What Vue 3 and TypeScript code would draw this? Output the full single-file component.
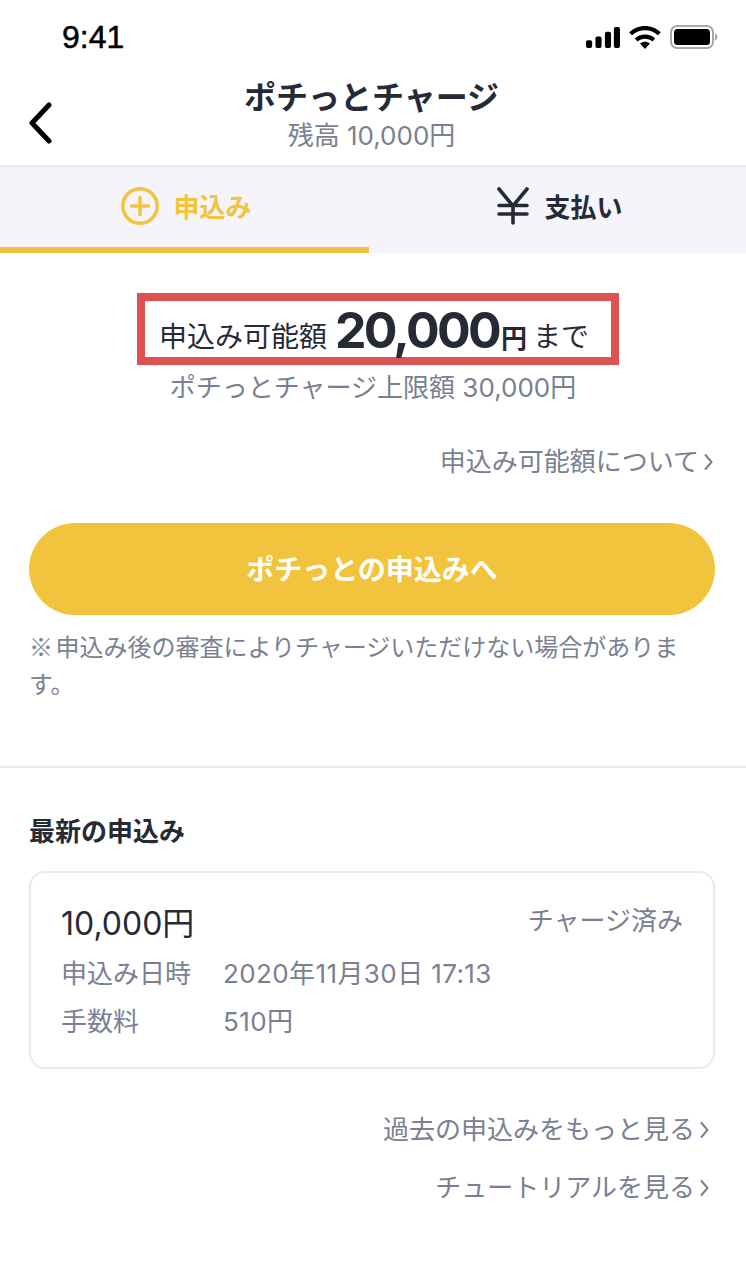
<script setup lang="ts">
const rows: { label: string; value: string }[] = [
  { label: '申込み日時', value: '2020年11月30日 17:13' },
  { label: '手数料', value: '510円' },
]
</script>

<template>
  <div class="page">
    <div class="status">
      <span class="time">9:41</span>
      <div class="status-icons">
        <svg width="34" height="21" viewBox="0 0 36 22">
          <rect x="0" y="14" width="6.500" height="8" rx="2" fill="#000" />
          <rect x="10" y="10" width="6.500" height="12" rx="2" fill="#000" />
          <rect x="20" y="5" width="6.500" height="17" rx="2" fill="#000" />
          <rect x="29.500" y="0" width="6.500" height="22" rx="2" fill="#000" />
        </svg>
        <svg width="32" height="23" viewBox="0 0 32 23">
          <path d="M16 23l-5-5.500c2.800-2.400 7.200-2.400 10 0z" fill="#000" />
          <path d="M16 8.500c4 0 7.600 1.500 10.200 4l-2.800 3c-4.200-3.600-10.600-3.600-14.800 0l-2.800-3c2.600-2.500 6.200-4 10.200-4z" fill="#000" />
          <path d="M16 0c6.100 0 11.700 2.400 15.800 6.300l-2.800 3C25.600 6 21 4.200 16 4.200S6.400 6 3 9.300L.2 6.300C4.300 2.400 9.900 0 16 0z" fill="#000" />
        </svg>
        <svg width="48" height="24" viewBox="0 0 48 24">
          <rect x="1" y="1" width="42" height="22" rx="6" fill="none" stroke="#a8a8a8" stroke-width="2" />
          <rect x="4" y="4" width="36" height="16" rx="3.500" fill="#000" />
          <path d="M45 8.500c1.500.5 2.500 2 2.500 3.500s-1 3-2.500 3.500z" fill="#a8a8a8" />
        </svg>
      </div>
    </div>

    <header class="nav">
      <svg class="back" width="26" height="42" viewBox="0 0 26 42">
        <path d="M22 3L5 21l17 18" fill="none" stroke="#000" stroke-width="5" stroke-linecap="round" stroke-linejoin="round" />
      </svg>
      <div class="nav-title">ポチっとチャージ</div>
      <div class="nav-sub">残高 10,000円</div>
    </header>

    <div class="tabs">
      <div class="tab tab-active">
        <svg width="38" height="38" viewBox="0 0 38 38">
          <circle cx="19" cy="19" r="17.200" fill="none" stroke="#f2c43d" stroke-width="3.500" />
          <path d="M19 10.500v17M10.500 19h17" stroke="#f2c43d" stroke-width="3.500" stroke-linecap="round" />
        </svg>
        <span class="tab-label">申込み</span>
      </div>
      <div class="tab tab-pay">
        <svg width="32" height="38" viewBox="0 0 32 38">
          <path d="M2 2l14 17L30 2M16 19v17M2 18.500h28M2 27h28" fill="none" stroke="#262a35" stroke-width="3.600" stroke-linecap="round" />
        </svg>
        <span class="tab-label">支払い</span>
      </div>
    </div>

    <section class="limit">
      <div class="highlight">
        <span class="lead">申込み可能額</span>
        <strong class="amount">20,000</strong>
        <strong class="yen">円</strong>
        <span class="made">まで</span>
      </div>
      <div class="cap">ポチっとチャージ上限額 30,000円</div>
    </section>

    <div class="link link-first">
      申込み可能額について
      <svg class="chev" width="9" height="18" viewBox="0 0 9 18"><path d="M1.500 2l6 7-6 7" fill="none" stroke="#7a7f91" stroke-width="2" stroke-linecap="round" stroke-linejoin="round" /></svg>
    </div>

    <section class="apply">
      <button class="cta" type="button">ポチっとの申込みへ</button>
      <p class="note">※ 申込み後の審査によりチャージいただけない場合があります。</p>
    </section>

    <section class="latest">
      <h2>最新の申込み</h2>
      <div class="card">
        <div class="card-top">
          <span class="card-amount">10,000円</span>
          <span class="card-state">チャージ済み</span>
        </div>
        <div v-for="row in rows" :key="row.label" class="card-row">
          <span class="card-label">{{ row.label }}</span>
          <span class="card-value">{{ row.value }}</span>
        </div>
      </div>
      <div class="link link-more">
        過去の申込みをもっと見る
        <svg class="chev" width="9" height="18" viewBox="0 0 9 18"><path d="M1.500 2l6 7-6 7" fill="none" stroke="#7a7f91" stroke-width="2" stroke-linecap="round" stroke-linejoin="round" /></svg>
      </div>
      <div class="link link-tutorial">
        チュートリアルを見る
        <svg class="chev" width="9" height="18" viewBox="0 0 9 18"><path d="M1.500 2l6 7-6 7" fill="none" stroke="#7a7f91" stroke-width="2" stroke-linecap="round" stroke-linejoin="round" /></svg>
      </div>
    </section>
  </div>
</template>

<style scoped>
.page {
  width: 746px;
  height: 1271px;
  overflow: hidden;
  background: #fff;
  color: #262a35;
  font-family: Inter, "Noto Sans CJK JP", sans-serif;
}
.status {
  height: 72px;
  box-sizing: border-box;
  padding: 18px 28px 0 62px;
  display: flex;
  justify-content: space-between;
  align-items: flex-start;
}
.time {
  font-family: "Liberation Sans", sans-serif;
  font-size: 32px;
  line-height: 38px;
  font-weight: 500;
  color: #000;
  -webkit-text-stroke: 0.5px #000;
}
.status-icons {
  display: flex;
  align-items: center;
  gap: 9px;
  padding-top: 7px;
}
.nav {
  height: 95px;
  box-sizing: border-box;
  position: relative;
  padding: 3px 3px 0 0;
  text-align: center;
  border-bottom: 2px solid #e6e9f6;
}
.back {
  position: absolute;
  left: 27px;
  top: 30px;
}
.nav-title {
  font-size: 32px;
  line-height: 46px;
  font-weight: 700;
}
.nav-sub {
  font-size: 26px;
  line-height: 30px;
  color: #7a7f91;
}
.tabs {
  display: flex;
  height: 86px;
  background: #f4f4fa;
}
.tab {
  flex: 0 0 377px;
  box-sizing: border-box;
  display: flex;
  align-items: center;
  justify-content: center;
  gap: 14px;
  font-size: 26px;
  font-weight: 700;
}
.tab-pay {
  padding: 0 0 8px 5px;
  gap: 15px;
}
.tab-active {
  flex: 0 0 369px;
  height: 86px;
  color: #f2c43d;
  border-bottom: 6px solid #f2c43d;
  padding: 0 0 2px 4px;
}
.tab-label {
  margin-bottom: 2px;
}
.limit {
  text-align: center;
  padding-top: 40px;
}
.highlight {
  width: 482px;
  height: 72px;
  box-sizing: border-box;
  margin-left: 137px;
  padding: 0 0 0 14px;
  border: 8px solid #dd5151;
  display: flex;
  align-items: baseline;
  font-size: 28px;
  line-height: 58px;
}
.lead,
.made {
  position: relative;
  top: -1px;
}
.amount {
  font-size: 50px;
  letter-spacing: -2.700px;
  font-weight: 700;
  margin-left: 8px;
}
.yen {
  font-size: 26px;
  font-weight: 700;
  margin-left: 2px;
}
.made {
  margin-left: 6px;
  font-size: 28px;
}
.cap {
  font-size: 26px;
  line-height: 38px;
  margin-top: 4px;
  color: #7a7f91;
}
.link {
  display: flex;
  justify-content: flex-end;
  align-items: center;
  gap: 5px;
  padding-right: 33px;
  font-size: 26px;
  line-height: 38px;
  color: #7a7f91;
}
.link-first {
  margin-top: 36px;
}
.apply {
  padding: 42px 31px 0 29px;
  height: 287px;
  box-sizing: border-box;
  border-bottom: 2px solid #e6e9f6;
}
.cta {
  display: block;
  width: 100%;
  height: 92px;
  padding: 0 0 2px;
  border: 0;
  border-radius: 46px;
  background: #f2c43d;
  color: #fff;
  font: inherit;
  font-size: 28px;
  font-weight: 700;
}
.note {
  margin: 12px 0 0;
  font-family: "Noto Sans CJK JP", sans-serif;
  font-size: 24px;
  line-height: 37px;
  word-spacing: -3px;
  color: #7a7f91;
}
.latest {
  padding: 45px 31px 0 29px;
}
h2 {
  margin: 0;
  font-size: 26px;
  line-height: 38px;
  font-weight: 700;
}
.card {
  margin-top: 20px;
  height: 198px;
  box-sizing: border-box;
  border: 2px solid #e6e9f6;
  border-radius: 16px;
  padding: 23px 30px 0 30px;
  color: #7a7f91;
  font-size: 26px;
}
.card-top {
  display: flex;
  justify-content: space-between;
  align-items: center;
  height: 51px;
}
.card-amount {
  font-size: 32px;
  margin-top: -2px;
  color: #262a35;
}
.card-state {
  margin-bottom: 6px;
}
.card-row {
  display: flex;
  height: 48px;
  align-items: center;
}
.card-label {
  width: 162px;
}
.card-value {
  letter-spacing: 0.400px;
}
.link-more {
  padding-right: 6px;
  margin-top: 42px;
}
.link-tutorial {
  padding-right: 6px;
  margin-top: 20px;
}
</style>
